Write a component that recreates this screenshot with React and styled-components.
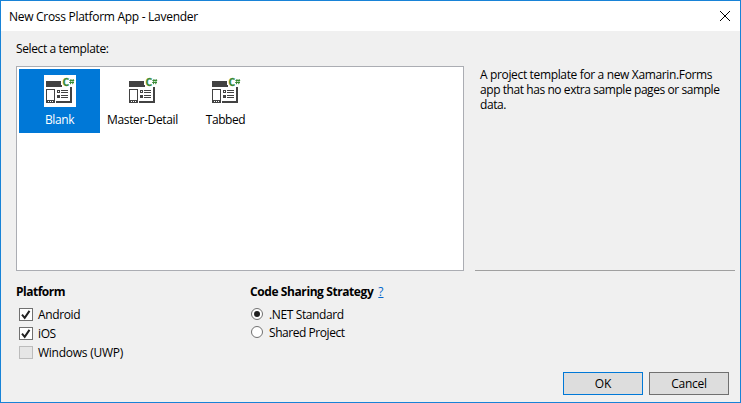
import React from "react";
import styled, { createGlobalStyle } from "styled-components";

const GlobalStyle = createGlobalStyle`
  * { box-sizing: border-box; }
  body { margin: 0; background: #f0f0f0; }
`;

const Dialog = styled.div`
  width: 741px;
  height: 403px;
  display: flex;
  flex-direction: column;
  border: 1px solid #1883d7;
  background: #f0f0f0;
  color: #000;
  font: 12px/15px "Open Sans", "Noto Sans", sans-serif;
  overflow: hidden;
`;

const Label = styled.span`
  display: block;
  white-space: nowrap;
  letter-spacing: ${(p) => p.$track ?? -0.38}px;
`;

const TitleBar = styled.header`
  height: 30px;
  flex: none;
  display: flex;
  align-items: center;
  justify-content: space-between;
  padding: 0 9px 0 8px;
  background: #fff;
`;

const CloseButton = styled.button`
  width: 13px;
  height: 13px;
  padding: 0;
  border: 0;
  background: none;
  svg { display: block; }
`;

const Prompt = styled.div`
  height: 35px;
  flex: none;
  padding: 10px 15px 0;
`;

const TemplateArea = styled.main`
  display: flex;
  height: 205px;
  flex: none;
  padding: 0 5px 0 15px;
  gap: 11px;
`;

const TemplateList = styled.div`
  width: 448px;
  display: flex;
  align-items: flex-start;
  gap: 2px;
  padding: 2px;
  border: 1px solid #abadb3;
  background: #fff;
`;

const Tile = styled.div`
  width: 81px;
  height: 64px;
  display: flex;
  flex-direction: column;
  align-items: center;
  padding-top: 6px;
  gap: 5px;
  background: ${(p) => (p.$selected ? "#0078d7" : "transparent")};
  color: ${(p) => (p.$selected ? "#fff" : "#000")};
`;

const TileIcon = styled.svg`
  display: block;
  width: 32px;
  height: 32px;
  margin-left: 1px;
  background: #fff;
`;

const Description = styled.aside`
  flex: 1;
  padding: 1px 0 0 5px;
  border-bottom: 1px solid #a0a0a0;
`;

const Options = styled.section`
  display: grid;
  grid-template-columns: 234px 1fr;
  height: 101px;
  flex: none;
  padding: 13px 15px 0;
`;

const Heading = styled.h2`
  display: flex;
  gap: 5px;
  margin: 0 0 6px;
  font: 700 12px/15px "Open Sans", "Noto Sans", sans-serif;
`;

const HelpLink = styled.a`
  color: #0066cc;
  font-weight: 400;
  text-decoration: underline;
`;

const CheckRow = styled.div`
  display: flex;
  align-items: center;
  height: 19px;
  padding-left: 3px;
  gap: 5px;
`;

const CheckBox = styled.span`
  width: 14px;
  height: 13px;
  border: 1px solid ${(p) => (p.$disabled ? "#bcbcbc" : "#707070")};
  background: ${(p) => (p.$disabled ? "#e6e6e6" : "#fff")};
  svg { display: block; }
`;

const RadioRow = styled.div`
  display: flex;
  align-items: center;
  height: 18px;
  padding-left: 1px;
  gap: 6px;
`;

const Radio = styled.span`
  width: 12px;
  height: 12px;
  display: grid;
  place-items: center;
  border: 1px solid #707070;
  border-radius: 50%;
  background: #fff;
  &::after {
    content: "";
    width: 6px;
    height: 6px;
    border-radius: 50%;
    background: ${(p) => (p.$on ? "#212121" : "transparent")};
  }
`;

const Footer = styled.footer`
  display: flex;
  justify-content: flex-end;
  gap: 6px;
  padding-right: 11px;
`;

const Button = styled.button`
  width: 80px;
  height: 23px;
  display: flex;
  align-items: center;
  justify-content: center;
  padding: 0;
  border: 1px solid ${(p) => (p.$primary ? "#0078d7" : "#707070")};
  background: #ddd;
  color: #000;
  font: inherit;
`;

const TemplateIcon = () => (
  <TileIcon viewBox="0 0 32 32">
    <g fill="#424242" shapeRendering="crispEdges">
      <path d="M2 6H17V10H18V12H2Z" />
      <path fillRule="evenodd" d="M2 14H11V28H2ZM3 15V25H10V15ZM4 26V27H5V26ZM6 26V27H7V26ZM8 26V27H9V26Z" />
      <path d="M26 12H28V28H12V26H26Z" />
      <path fillRule="evenodd" d="M13 15H16V18H13ZM14 16V17H15V16Z" />
      <path d="M13 20H16V23H13ZM17 15H24V16H17ZM17 17H24V18H17ZM17 20H24V21H17ZM17 22H24V23H17Z" />
    </g>
    <text x="18.4" y="11" fill="#388a34" stroke="#388a34" strokeWidth="0.3" fontFamily="Open Sans, sans-serif" fontSize="10" fontWeight="700" textLength="6.6" lengthAdjust="spacingAndGlyphs">C</text>
    <path d="M27 4 26.5 9.2M29.2 4 28.7 9.2M25.4 5.5H30.2M25.2 7.5H30" fill="none" stroke="#388a34" strokeWidth="1" />
  </TileIcon>
);

const CheckMark = () => (
  <svg width="12" height="11" viewBox="0 0 12 11">
    <path d="M2 5.7 4.7 8.8 9.5 1.9" fill="none" stroke="#212121" strokeWidth="2" />
  </svg>
);

const templates = [
  { name: "Blank", selected: true, track: -0.4 },
  { name: "Master-Detail", track: -0.35 },
  { name: "Tabbed", track: -0.4 },
];

const platforms = [
  { name: "Android", checked: true },
  { name: "iOS", checked: true },
  { name: "Windows (UWP)", disabled: true, track: -0.25 },
];

export default function App() {
  return (
    <>
      <GlobalStyle />
      <Dialog>
        <TitleBar>
          <Label $track={-0.29}>New Cross Platform App - Lavender</Label>
          <CloseButton aria-label="Close">
            <svg width="13" height="13" viewBox="0 0 13 13">
              <path d="M2 1 12 11M12 1 2 11" stroke="#000" strokeWidth="1" />
            </svg>
          </CloseButton>
        </TitleBar>
        <Prompt><Label>Select a template:</Label></Prompt>
        <TemplateArea>
          <TemplateList>
            {templates.map((t) => (
              <Tile key={t.name} $selected={t.selected}>
                <TemplateIcon />
                <Label $track={t.track}>{t.name}</Label>
              </Tile>
            ))}
          </TemplateList>
          <Description>
            <Label $track={-0.35}>A project template for a new Xamarin.Forms</Label>
            <Label $track={-0.43}>app that has no extra sample pages or sample</Label>
            <Label $track={-0.4}>data.</Label>
          </Description>
        </TemplateArea>
        <Options>
          <div>
            <Heading><Label $track={-0.5}>Platform</Label></Heading>
            {platforms.map((p) => (
              <CheckRow key={p.name}>
                <CheckBox $disabled={p.disabled}>{p.checked && <CheckMark />}</CheckBox>
                <Label $track={p.track}>{p.name}</Label>
              </CheckRow>
            ))}
          </div>
          <div>
            <Heading><Label $track={-0.41}>Code Sharing Strategy</Label><HelpLink>?</HelpLink></Heading>
            <RadioRow><Radio $on /><Label>.NET Standard</Label></RadioRow>
            <RadioRow><Radio /><Label $track={-0.45}>Shared Project</Label></RadioRow>
          </div>
        </Options>
        <Footer>
          <Button $primary><Label $track={-0.2}>OK</Label></Button>
          <Button><Label $track={-0.3}>Cancel</Label></Button>
        </Footer>
      </Dialog>
    </>
  );
}
